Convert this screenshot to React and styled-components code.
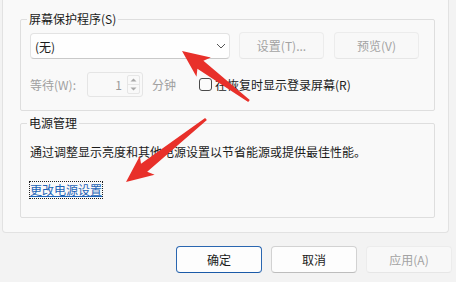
import React from "react";
import styled, { createGlobalStyle } from "styled-components";

const Global = createGlobalStyle`
  html, body { margin: 0; padding: 0; background: #f0f0f0; }
  body { font-family: "Noto Sans CJK SC", "Noto Sans", sans-serif; font-size: 12px; color: #1b1b1b; }
`;

const Screen = styled.div`
  position: relative;
  width: 456px;
  height: 282px;
  overflow: hidden;
  background: #f3f3f3;
  display: flex;
  flex-direction: column;
`;

const Panel = styled.div`
  margin-left: 2px;
  width: 447px;
  height: 233px;
  box-sizing: border-box;
  background: #f9f9f9;
  border: 1px solid #e2e2e2;
  border-top: none;
  border-radius: 0 0 4px 4px;
  padding: 19px 13px 0 17px;
  display: flex;
  flex-direction: column;
  gap: 12px;
`;

const Group = styled.div`
  position: relative;
  box-sizing: border-box;
  height: ${(p) => p.h}px;
  border: 1px solid #dedede;
  border-radius: 2px;
  padding: ${(p) => p.pad};
  display: flex;
  flex-direction: column;
`;

const Legend = styled.span`
  position: absolute;
  top: -10px;
  left: 6px;
  padding: 0 2px;
  background: #f9f9f9;
  line-height: 18px;
  color: #1b1b1b;
`;

const Row = styled.div`
  display: flex;
  align-items: center;
  gap: ${(p) => p.gap || 0}px;
`;

const Combo = styled.div`
  width: 200px;
  height: 26px;
  box-sizing: border-box;
  background: #fefefe;
  border: 1px solid #e3e3e3;
  border-bottom-color: #c9c9c9;
  border-radius: 4px;
  display: flex;
  align-items: center;
  justify-content: space-between;
  padding: 0 3px 0 4px;
  margin-top: 1px;
`;

const Button = styled.div`
  width: ${(p) => p.w || 85}px;
  height: 27px;
  box-sizing: border-box;
  border-radius: 4px;
  display: flex;
  align-items: center;
  justify-content: center;
  background: ${(p) => (p.disabled ? "#f8f8f8" : "#fdfdfd")};
  color: ${(p) => (p.disabled ? "#a3a3a3" : "#1b1b1b")};
  border: 1px solid ${(p) => (p.primary ? "#2a66b0" : p.disabled ? "#ececec" : "#d2d2d2")};
  border-bottom-color: ${(p) => (p.primary ? "#1a5aa8" : p.disabled ? "#e6e6e6" : "#bdbdbd")};
`;

const Dim = styled.span`
  color: #a0a0a0;
  width: ${(p) => p.w || "auto"};
`;

const Spin = styled.div`
  width: 56px;
  height: 25px;
  box-sizing: border-box;
  border: 1px solid #e5e5e5;
  border-radius: 3px;
  background: #f9f9f9;
  display: flex;
  align-items: center;
  justify-content: flex-end;
  padding: 2px 2px 2px 0;
  gap: 5px;
  color: #9a9a9a;
`;

const SpinBtns = styled.div`
  display: flex;
  flex-direction: column;
  width: 13px;
  height: 19px;
  border: 1px solid #e6e6e6;
  border-radius: 2px;
  box-sizing: border-box;
`;

const SpinBtn = styled.div`
  flex: 1;
  display: flex;
  align-items: center;
  justify-content: center;
  border-top: ${(p) => (p.down ? "1px solid #e6e6e6" : "none")};
`;

const Check = styled.div`
  width: 13px;
  height: 13px;
  box-sizing: border-box;
  border: 1px solid #4a4a4a;
  border-radius: 3px;
  background: #fbfbfb;
`;

const CheckLabel = styled.label`
  display: flex;
  align-items: center;
  gap: 3px;
`;

const Para = styled.div`
  line-height: 18px;
  margin-top: -1px;
`;

const Link = styled.span`
  align-self: flex-start;
  color: #1c63b7;
  text-decoration: underline;
  outline: 1px dotted #222;
  outline-offset: 0;
  line-height: 16px;
  margin-top: 21px;
`;

const Footer = styled.div`
  display: flex;
  justify-content: flex-end;
  gap: 9px;
  padding: 13px 4px 0 0;
`;

const Overlay = styled.svg`
  position: absolute;
  left: 0;
  top: 0;
  pointer-events: none;
`;

function arrowPoints(tip, tail, headLen, headHalf, neckHalf, tailHalf) {
  const dx = tail[0] - tip[0];
  const dy = tail[1] - tip[1];
  const len = Math.hypot(dx, dy);
  const ux = dx / len, uy = dy / len;
  const nx = -uy, ny = ux;
  const at = (d, w) => [tip[0] + ux * d + nx * w, tip[1] + uy * d + ny * w];
  const pts = [
    at(0, 0),
    at(headLen, headHalf),
    at(headLen - 4, neckHalf),
    at(len, tailHalf),
    at(len, -tailHalf),
    at(headLen - 4, -neckHalf),
    at(headLen, -headHalf),
  ];
  return pts.map((p) => p.map((v) => v.toFixed(1)).join(",")).join(" ");
}

export default function App() {
  return (
    <Screen>
      <Global />
      <Panel>
        <Group h={92} pad="12px 15px 0 9px">
          <Legend>屏幕保护程序(S)</Legend>
          <Row gap={9}>
            <Combo>
              <span>(无)</span>
              <svg width="10" height="6" viewBox="0 0 10 6">
                <path d="M1 1 L5 5 L9 1" fill="none" stroke="#555" strokeWidth="1" />
              </svg>
            </Combo>
            <Button disabled>设置(T)...</Button>
            <Button disabled style={{ marginLeft: 1 }}>预览(V)</Button>
          </Row>
          <Row style={{ marginTop: 13 }}>
            <Dim w="57px">等待(W):</Dim>
            <Spin>
              <span>1</span>
              <SpinBtns>
                <SpinBtn>
                  <svg width="7" height="4" viewBox="0 0 7 4"><path d="M0.5 3.5 L3.5 0.5 L6.5 3.5Z" fill="#a8a8a8" /></svg>
                </SpinBtn>
                <SpinBtn down>
                  <svg width="7" height="4" viewBox="0 0 7 4"><path d="M0.5 0.5 L3.5 3.5 L6.5 0.5Z" fill="#a8a8a8" /></svg>
                </SpinBtn>
              </SpinBtns>
            </Spin>
            <Dim style={{ marginLeft: 9 }}>分钟</Dim>
            <CheckLabel style={{ marginLeft: 23 }}>
              <Check />
              <span>在恢复时显示登录屏幕(R)</span>
            </CheckLabel>
          </Row>
        </Group>
        <Group h={95} pad="20px 9px 0 9px">
          <Legend>电源管理</Legend>
          <Para>通过调整显示亮度和其他电源设置以节省能源或提供最佳性能。</Para>
          <Link>更改电源设置</Link>
        </Group>
      </Panel>
      <Footer>
        <Button w={86} primary>确定</Button>
        <Button w={86}>取消</Button>
        <Button w={86} disabled>应用(A)</Button>
      </Footer>
      <Overlay width="456" height="282" viewBox="0 0 456 282">
        <polygon points={arrowPoints([182, 51], [249, 101], 27, 12, 5, 1.4)} fill="#e8302a" />
        <polygon points={arrowPoints([126, 182], [206, 119], 27, 12, 5, 1.4)} fill="#e8302a" />
      </Overlay>
    </Screen>
  );
}
